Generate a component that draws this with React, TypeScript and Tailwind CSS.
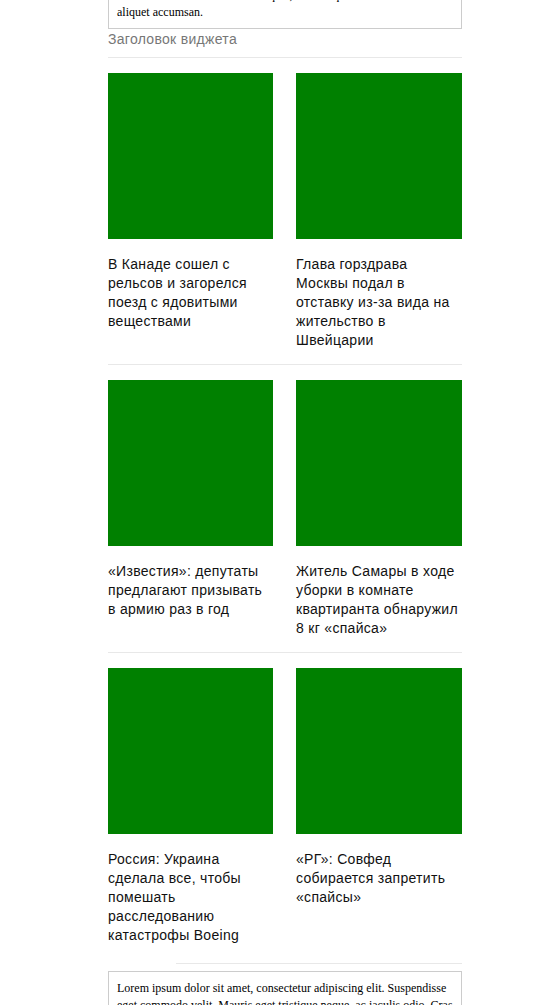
const news = [
  [
    "В Канаде сошел с рельсов и загорелся поезд с ядовитыми веществами",
    "Глава горздрава Москвы подал в отставку из-за вида на жительство в Швейцарии",
  ],
  [
    "«Известия»: депутаты предлагают призывать в армию раз в год",
    "Житель Самары в ходе уборки в комнате квартиранта обнаружил 8 кг «спайса»",
  ],
  [
    "Россия: Украина сделала все, чтобы помешать расследованию катастрофы Boeing",
    "«РГ»: Совфед собирается запретить «спайсы»",
  ],
];

function NewsRow({ items, last }: { items: string[]; last: boolean }) {
  return (
    <div
      className={
        last
          ? "grid grid-cols-[165px_166px] gap-x-[23px] pt-[15px]"
          : "grid grid-cols-[165px_166px] gap-x-[23px] border-b border-[#e8e8e8] pt-[15px] pb-[14px]"
      }
    >
      {items.map((title) => (
        <div key={title}>
          <div className="h-[166px] bg-[#008000]" />
          <p className="mt-[16px] text-[14px] leading-[19px] tracking-[0.3px] text-[#111]">
            {title}
          </p>
        </div>
      ))}
    </div>
  );
}

export default function App() {
  return (
    <div className="min-h-[1005px] overflow-hidden bg-white">
      <div className="ml-[108px] w-[354px] font-['Liberation_Sans',Arial,sans-serif]">
        <div className="-mt-[13px] border border-t-0 border-[#cccccc] px-2 pb-[7px] font-['Liberation_Serif',serif] text-[12px] leading-[17px] text-black">
          <p>
            nec. Maecenas cursus nisl in aliquet, vitae neque lacinia massa at
            aliquet accumsan.
          </p>
        </div>
        <h3 className="border-b border-[#e8e8e8] pb-[8px] text-[14px] leading-[20px] tracking-[0.3px] text-[#777]">
          Заголовок виджета
        </h3>
        {news.map((row, i) => (
          <NewsRow key={i} items={row} last={i === news.length - 1} />
        ))}
        <div className="mt-[18px] ml-[68px] h-px bg-[#e8e8e8]" />
        <div className="mt-[7px] border border-[#cccccc] px-2 pt-[8px] pb-2 font-['Liberation_Serif',serif] text-[12px] leading-[17px] text-black">
          <p>
            Lorem ipsum dolor sit amet, consectetur adipiscing elit. Suspendisse
            eget commodo velit. Mauris eget tristique neque, ac iaculis odio. Cras
            aliquet accumsan.
          </p>
        </div>
      </div>
    </div>
  );
}
